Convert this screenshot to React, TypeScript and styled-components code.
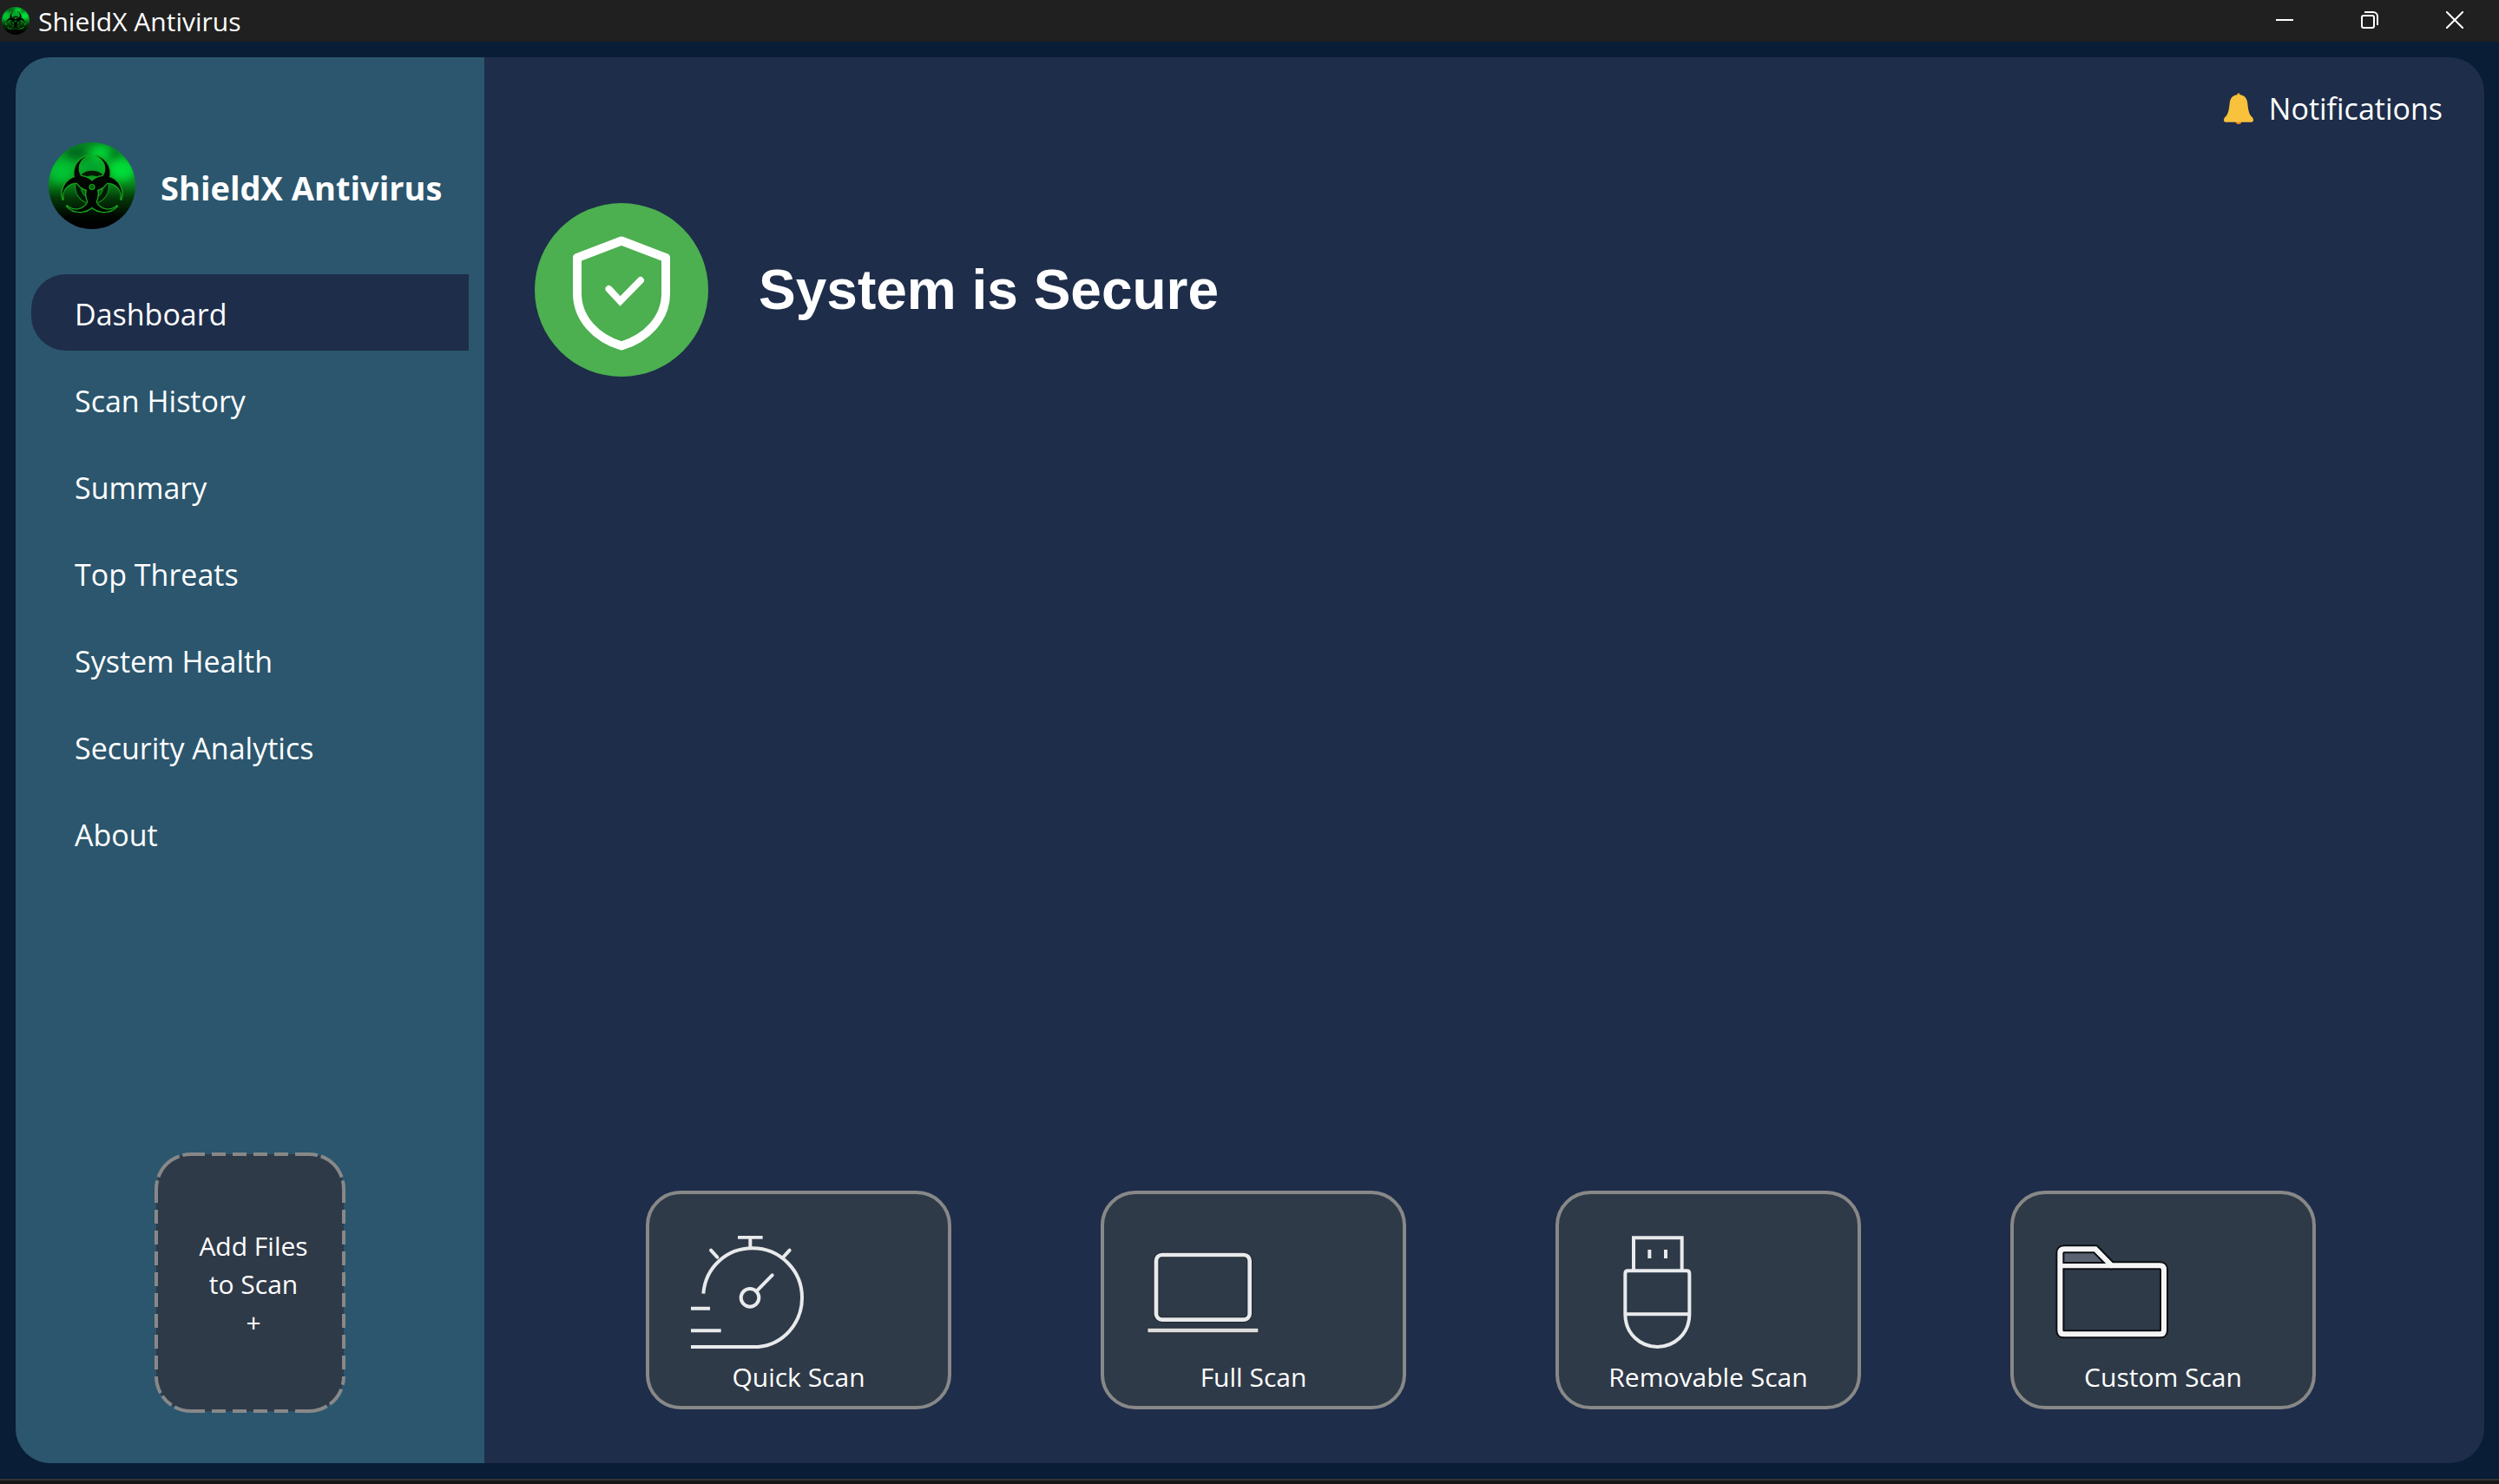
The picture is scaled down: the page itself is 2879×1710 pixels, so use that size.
import React, { useId, useState } from "react";
import styled, { createGlobalStyle } from "styled-components";

const GlobalStyle = createGlobalStyle`
  *, *::before, *::after { box-sizing: border-box; }
  body {
    margin: 0;
    background: #091d36;
    color: #ffffff;
    font-family: "Open Sans", "Noto Sans", sans-serif;
  }
  button {
    border: 0;
    padding: 0;
    background: none;
    color: inherit;
    font: inherit;
    cursor: pointer;
  }
  svg { display: block; flex: none; }
`;

const Window = styled.div`
  display: flex;
  flex-direction: column;
  min-height: 100vh;
`;

const TitleBar = styled.header`
  display: flex;
  align-items: center;
  gap: 10px;
  height: 48px;
  padding: 0 2px;
  background: #202020;
`;

const WindowTitle = styled.span`
  flex: 1;
  padding-top: 2px;
  font-size: 30px;
  line-height: 44px;
`;

const WindowControls = styled.div`
  display: flex;
  align-self: stretch;
`;

const WindowButton = styled.button`
  display: flex;
  align-items: center;
  justify-content: center;
  width: 98px;
  padding-bottom: 2px;
`;

const Shell = styled.div`
  flex: 1;
  display: flex;
  padding: 18px 17px 18px 18px;
`;

const Panel = styled.div`
  flex: 1;
  display: flex;
  border-radius: 40px;
  overflow: hidden;
  background: #1e2d4a;
`;

const Sidebar = styled.aside`
  flex: none;
  display: flex;
  flex-direction: column;
  width: 540px;
  padding: 98px 18px 58px;
  background: #2b566e;
`;

const Brand = styled.div`
  display: flex;
  align-items: center;
  gap: 29px;
  padding-left: 20px;
`;

const BrandName = styled.strong`
  padding-top: 4px;
  font-size: 38px;
  line-height: 52px;
  font-weight: 700;
  white-space: nowrap;
`;

const Nav = styled.nav`
  display: flex;
  flex-direction: column;
  gap: 12px;
  margin-top: 52px;
`;

const NavItem = styled.button<{ $active: boolean }>`
  height: 88px;
  padding: 4px 0 0 50px;
  border-radius: 40px 0 0 40px;
  background: ${(p) => (p.$active ? "#1e2d4a" : "transparent")};
  font-size: 34px;
  line-height: 48px;
  text-align: left;
`;

const DropZone = styled.button`
  position: relative;
  align-self: center;
  width: 220px;
  height: 300px;
  margin-top: auto;
  padding: 4px 0 0 8px;
  font-size: 30px;
  line-height: 44px;
  text-align: center;
`;

const DropOutline = styled.svg`
  position: absolute;
  inset: 0;
`;

const DropText = styled.span`
  position: relative;
  display: block;
`;

const Main = styled.main`
  flex: 1;
  display: flex;
  flex-direction: column;
  padding: 35px 48px 62px 58px;
`;

const Notifications = styled.button`
  align-self: flex-end;
  display: flex;
  align-items: center;
  gap: 18px;
  font-size: 34px;
  line-height: 48px;
`;

const Status = styled.section`
  display: flex;
  align-items: center;
  gap: 58px;
  margin-top: 85px;
`;

const StatusTitle = styled.h1`
  margin: 0;
  font-family: "Liberation Sans", Arial, sans-serif;
  font-size: 64px;
  line-height: 76px;
  font-weight: 700;
`;

const ScanRow = styled.section`
  display: flex;
  justify-content: space-between;
  margin-top: auto;
  padding: 0 146px 0 128px;
`;

const ScanCard = styled.button`
  display: flex;
  flex-direction: column;
  gap: 12px;
  width: 352px;
  height: 252px;
  padding: 48px 48px 0;
  border: 4px solid #888888;
  border-radius: 40px;
  background: #2f3a48;
`;

const ScanLabel = styled.span`
  align-self: center;
  font-size: 30px;
  line-height: 42px;
  white-space: nowrap;
`;

const BottomEdge = styled.div`
  height: 6px;
  border-top: 2px solid #333333;
  background: #171717;
`;

const HORN =
  "M45.5 15.5 A20.5 20.5 0 1 0 54.5 15.5 A15.4 15.4 0 1 1 45.5 15.5 Z";
const HORN_TURNS = [0, 120, 240];

function Logo({ size }: { size: number }) {
  const id = useId();
  return (
    <svg width={size} height={size} viewBox="0 0 100 100" aria-hidden="true">
      <defs>
        <linearGradient id={`${id}-bg`} x1="0" y1="0" x2="0" y2="1">
          <stop offset="0" stopColor="#07801f" />
          <stop offset="0.3" stopColor="#05b02c" />
          <stop offset="0.48" stopColor="#07861c" />
          <stop offset="0.64" stopColor="#033a08" />
          <stop offset="0.86" stopColor="#000500" />
          <stop offset="1" stopColor="#000000" />
        </linearGradient>
        <filter id={`${id}-soft`} x="-50%" y="-50%" width="200%" height="200%">
          <feGaussianBlur stdDeviation="4" />
        </filter>
        <clipPath id={`${id}-clip`}>
          <circle cx="50" cy="50" r="50" />
        </clipPath>
      </defs>
      <g clipPath={`url(#${id}-clip)`}>
        <rect width="100" height="100" fill={`url(#${id}-bg)`} />
        <g filter={`url(#${id}-soft)`}>
          <ellipse cx="60" cy="12" rx="12" ry="9" fill="#04cf35" />
          <ellipse cx="84" cy="32" rx="14" ry="12" fill="#02dc38" />
          <ellipse cx="15" cy="34" rx="13" ry="12" fill="#04c233" />
          <ellipse cx="32" cy="12" rx="12" ry="7" fill="#05681c" />
          <ellipse cx="76" cy="14" rx="7" ry="6" fill="#067a20" />
          <ellipse cx="50" cy="31" rx="10" ry="9" fill="#04a22f" />
        </g>
        <circle cx="50" cy="51.5" r="16" fill="none" stroke="#13901b" strokeWidth="7.6" />
        <circle cx="50" cy="51.5" r="16" fill="none" stroke="#021a04" strokeWidth="5.4" />
        {HORN_TURNS.map((turn) => (
          <path
            key={turn}
            d={HORN}
            transform={`rotate(${turn} 50 51.5)`}
            fill="none"
            stroke="#17a31c"
            strokeWidth="2.6"
            strokeLinejoin="round"
          />
        ))}
        {HORN_TURNS.map((turn) => (
          <path key={turn} d={HORN} transform={`rotate(${turn} 50 51.5)`} fill="#000600" />
        ))}
        <circle cx="50" cy="51.5" r="3" fill="#045d0c" stroke="#17a31c" strokeWidth="1.2" />
      </g>
    </svg>
  );
}

function MinimizeIcon() {
  return (
    <svg width="20" height="20" viewBox="0 0 20 20" aria-hidden="true">
      <path d="M0 10H20" stroke="#fff" strokeWidth="2" />
    </svg>
  );
}

function RestoreIcon() {
  return (
    <svg width="20" height="20" viewBox="0 0 20 20" fill="none" stroke="#fff" strokeWidth="2" aria-hidden="true">
      <rect x="1" y="5" width="14" height="14" rx="2" />
      <path d="M4 1H14a5 5 0 0 1 5 5v10" />
    </svg>
  );
}

function CloseIcon() {
  return (
    <svg width="20" height="20" viewBox="0 0 20 20" aria-hidden="true">
      <path d="M0 0 20 20M20 0 0 20" stroke="#fff" strokeWidth="2" />
    </svg>
  );
}

function BellIcon() {
  return (
    <svg width="34" height="36" viewBox="0 0 102 108" aria-hidden="true">
      <circle cx="51" cy="98" r="10" fill="#f5821f" />
      <circle cx="51" cy="6" r="5" fill="#f5a623" />
      <path
        d="M51 6c18 0 29 11 31 30 2 22 5 36 12 44 5 4 8 8 8 14 0 5-2 7-6 7H6c-4 0-6-2-6-7 0-6 3-10 8-14 7-8 10-22 12-44C22 17 33 6 51 6Z"
        fill="#f9c23c"
      />
    </svg>
  );
}

function SecureIcon() {
  return (
    <svg width="200" height="200" viewBox="0 0 200 200" aria-hidden="true">
      <circle cx="100" cy="100" r="100" fill="#4caf50" />
      <g fill="none" stroke="#fff" strokeLinejoin="round" strokeLinecap="round">
        <path
          d="M100 43.500 151 63V104C151 134 128 156 100 164.500 72 156 49 134 49 104V63Z"
          strokeWidth="10"
        />
        <path d="M85.500 99 98.500 113 122 89" strokeWidth="8" strokeLinejoin="miter" />
      </g>
    </svg>
  );
}

function ScanIcon({ children }: { children: React.ReactNode }) {
  return (
    <svg
      width="130"
      height="130"
      viewBox="0 0 390 390"
      fill="none"
      stroke="#e8eaec"
      strokeWidth="12"
      aria-hidden="true"
    >
      {children}
    </svg>
  );
}

function StopwatchIcon() {
  return (
    <ScanIcon>
      <path d="M43 200C50 110 122 43 213 43A171 171 0 0 1 384 214C384 303 318 376 232 384H0" />
      <path d="M162 5H248M205 5V42" />
      <path d="M69 50 91 74M341 50 317 76" strokeLinecap="round" />
      <circle cx="204" cy="214" r="31" />
      <path d="M227 191 281 136" strokeLinecap="round" />
      <path d="M0 251H66M0 328H104" />
    </ScanIcon>
  );
}

function LaptopIcon() {
  return (
    <ScanIcon>
      <g stroke="#20272f" strokeWidth="20">
        <rect x="36" y="66" width="323" height="224" rx="20" />
        <path d="M4 327H390" />
      </g>
      <rect x="36" y="66" width="323" height="224" rx="20" strokeWidth="14" />
      <path d="M7 327H388" stroke="#dcdcdc" strokeWidth="13" />
    </ScanIcon>
  );
}

function UsbIcon() {
  return (
    <ScanIcon>
      <path d="M114 120V7H281V120" />
      <path d="M85 131q0-10 10-10H297q10 0 10 10V271C307 340 253 384 196 384S85 340 85 271Z" />
      <path d="M85 271H307M169 48V78M225 48V78" />
    </ScanIcon>
  );
}

function FolderIcon() {
  const outline =
    "M16 326V60Q16 46 30 46H138L194 103H361Q375 103 375 117V326Q375 340 361 340H30Q16 340 16 326Z";
  return (
    <ScanIcon>
      <path d="M16 46H138L190 103H16Z" fill="#5a6272" stroke="none" />
      <path d={outline} stroke="#0b0e12" strokeWidth="30" />
      <path d="M16 104H194" stroke="#0b0e12" strokeWidth="28" />
      <path d="M16 104H194" stroke="#f2f2f2" strokeWidth="16" />
      <path d={outline} stroke="#f5f5f5" strokeWidth="18" />
    </ScanIcon>
  );
}

const NAV_ITEMS = [
  "Dashboard",
  "Scan History",
  "Summary",
  "Top Threats",
  "System Health",
  "Security Analytics",
  "About",
];

const SCANS = [
  { label: "Quick Scan", Icon: StopwatchIcon },
  { label: "Full Scan", Icon: LaptopIcon },
  { label: "Removable Scan", Icon: UsbIcon },
  { label: "Custom Scan", Icon: FolderIcon },
];

function DropFrame() {
  return (
    <DropOutline width="220" height="300" viewBox="0 0 220 300" fill="none" aria-hidden="true">
      <rect x="2" y="2" width="216" height="296" rx="40" fill="#2f3a48" />
      <g stroke="#888888" strokeWidth="4">
        <path d="M42 2H178M42 298H178M2 42V258M218 42V258" strokeDasharray="16 8" />
        <path d="M2 42A40 40 0 0 1 42 2" strokeDasharray="10 4 35 4 10 0" />
        <path d="M178 2A40 40 0 0 1 218 42" strokeDasharray="10 4 35 4 10 0" />
        <path d="M2 258A40 40 0 0 0 42 298" strokeDasharray="20 4 15 4 20 0" />
        <path d="M218 258A40 40 0 0 1 178 298" strokeDasharray="10 5 22 4 22 0" />
      </g>
    </DropOutline>
  );
}

export default function App() {
  const [active, setActive] = useState("Dashboard");

  return (
    <Window>
      <GlobalStyle />
      <TitleBar>
        <Logo size={32} />
        <WindowTitle>ShieldX Antivirus</WindowTitle>
        <WindowControls>
          <WindowButton aria-label="Minimize">
            <MinimizeIcon />
          </WindowButton>
          <WindowButton aria-label="Restore">
            <RestoreIcon />
          </WindowButton>
          <WindowButton aria-label="Close">
            <CloseIcon />
          </WindowButton>
        </WindowControls>
      </TitleBar>

      <Shell>
        <Panel>
          <Sidebar>
            <Brand>
              <Logo size={100} />
              <BrandName>ShieldX Antivirus</BrandName>
            </Brand>
            <Nav>
              {NAV_ITEMS.map((item) => (
                <NavItem
                  key={item}
                  $active={item === active}
                  aria-current={item === active ? "page" : undefined}
                  onClick={() => setActive(item)}
                >
                  {item}
                </NavItem>
              ))}
            </Nav>
            <DropZone>
              <DropFrame />
              <DropText>Add Files</DropText>
              <DropText>to Scan</DropText>
              <DropText>+</DropText>
            </DropZone>
          </Sidebar>

          <Main>
            <Notifications>
              <BellIcon />
              Notifications
            </Notifications>
            <Status>
              <SecureIcon />
              <StatusTitle>System is Secure</StatusTitle>
            </Status>
            <ScanRow>
              {SCANS.map(({ label, Icon }) => (
                <ScanCard key={label}>
                  <Icon />
                  <ScanLabel>{label}</ScanLabel>
                </ScanCard>
              ))}
            </ScanRow>
          </Main>
        </Panel>
      </Shell>
      <BottomEdge />
    </Window>
  );
}
